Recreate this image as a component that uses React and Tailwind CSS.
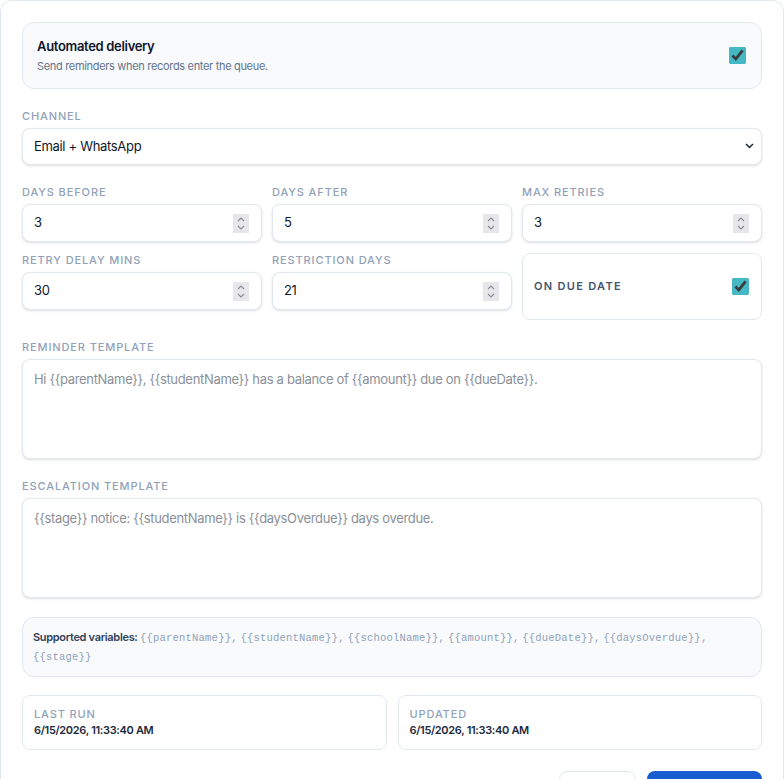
import { useState } from "react";

const labelCls =
  "text-[11px] font-medium uppercase tracking-[0.08em] text-slate-400 leading-[14px]";
const boxCls =
  "flex h-[38px] w-full items-center rounded-lg border border-slate-200 bg-white pl-[11px] pr-[12px] shadow-sm";

const Stepper = () => (
  <div className="flex h-[19px] w-[16px] flex-col items-center justify-center gap-[3px] bg-[#e6e6eb]">
    <svg width="8" height="5" viewBox="0 0 8 5" fill="none">
      <path d="M1 4 L4 1 L7 4" stroke="#8b8b96" strokeWidth="1.1" />
    </svg>
    <svg width="8" height="5" viewBox="0 0 8 5" fill="none">
      <path d="M1 1 L4 4 L7 1" stroke="#8b8b96" strokeWidth="1.1" />
    </svg>
  </div>
);

const NumberField = ({ label, value }) => (
  <div className="flex flex-col gap-[5px]">
    <span className={labelCls}>{label}</span>
    <div className={boxCls}>
      <input
        type="number"
        defaultValue={value}
        className="min-w-0 flex-1 bg-transparent text-[13px] text-slate-900 outline-none [appearance:textfield] [&::-webkit-inner-spin-button]:appearance-none [&::-webkit-outer-spin-button]:appearance-none"
      />
      <Stepper />
    </div>
  </div>
);

const MetaBox = ({ label, value }) => (
  <div className="flex flex-col gap-[3px] rounded-lg border border-slate-200 bg-white px-[11px] py-[12px]">
    <span className="text-[11px] font-medium uppercase leading-[13px] tracking-[0.08em] text-slate-400">
      {label}
    </span>
    <span className="text-[11px] font-semibold leading-[13px] text-slate-800">{value}</span>
  </div>
);

const vars = [
  "{{parentName}}",
  "{{studentName}}",
  "{{schoolName}}",
  "{{amount}}",
  "{{dueDate}}",
  "{{daysOverdue}}",
  "{{stage}}",
];

export default function App() {
  const [auto, setAuto] = useState(true);
  const [onDue, setOnDue] = useState(true);

  return (
    <div
      className="min-h-screen bg-white tracking-[-0.02em]"
      style={{ fontFamily: "Inter, 'Noto Sans', sans-serif" }}
    >
      <div className="flex flex-col gap-5 rounded-xl border border-slate-200 bg-white p-[21px]">
        {/* automated toggle */}
        <div className="flex items-center justify-between rounded-xl border border-slate-200 bg-slate-50 px-[14px] py-[14px]">
          <div className="flex flex-col gap-[4px]">
            <span className="text-[13px] font-semibold leading-[18px] text-slate-900">
              Automated delivery
            </span>
            <span className="text-[11px] leading-[15px] text-slate-500">
              Send reminders when records enter the queue.
            </span>
          </div>
          <input
            type="checkbox"
            checked={auto}
            onChange={(e) => setAuto(e.target.checked)}
            className="mr-[1px] h-[17px] w-[17px] accent-[#45b8c6]"
          />
        </div>

        <div className="flex flex-col gap-[5px]">
          <span className={labelCls}>Channel</span>
          <div className="relative">
            <select className="h-[37px] w-full appearance-none rounded-lg border border-slate-200 bg-white px-[11px] text-[13px] text-slate-900 shadow-sm outline-none">
              <option>Email + WhatsApp</option>
              <option>Email</option>
              <option>WhatsApp</option>
            </select>
            <svg
              className="pointer-events-none absolute right-[8px] top-[15px]"
              width="9"
              height="6"
              viewBox="0 0 9 6"
              fill="none"
            >
              <path d="M1 1 L4.5 4.5 L8 1" stroke="#1e293b" strokeWidth="1.5" />
            </svg>
          </div>
        </div>

        <div className="grid grid-cols-3 items-start gap-x-[10px] gap-y-[11px]">
          <NumberField label="Days before" value={3} />
          <NumberField label="Days after" value={5} />
          <NumberField label="Max retries" value={3} />
          <NumberField label="Retry delay mins" value={30} />
          <NumberField label="Restriction days" value={21} />
          <label className="flex h-[67px] items-center justify-between rounded-lg border border-slate-200 bg-white px-[11px]">
            <span className="text-[11px] font-semibold uppercase tracking-[0.12em] text-slate-600">
              On due date
            </span>
            <input
              type="checkbox"
              checked={onDue}
              onChange={(e) => setOnDue(e.target.checked)}
              className="mr-[1px] h-[17px] w-[17px] accent-[#45b8c6]"
            />
          </label>
        </div>

        <div className="flex flex-col gap-[5px]">
          <span className={labelCls}>Reminder template</span>
          <textarea
            rows={4}
            placeholder="Hi {{parentName}}, {{studentName}} has a balance of {{amount}} due on {{dueDate}}."
            className="h-[100px] w-full resize-none rounded-lg border border-slate-200 bg-white px-[11px] py-[10px] text-[13px] text-slate-900 shadow-sm outline-none placeholder:text-[#8a9099]"
          />
        </div>

        <div className="flex flex-col gap-[5px]">
          <span className={labelCls}>Escalation template</span>
          <textarea
            rows={4}
            placeholder="{{stage}} notice: {{studentName}} is {{daysOverdue}} days overdue."
            className="h-[100px] w-full resize-none rounded-lg border border-slate-200 bg-white px-[11px] py-[10px] text-[13px] text-slate-900 shadow-sm outline-none placeholder:text-[#8a9099]"
          />
        </div>

        <div className="-mt-px rounded-xl border border-slate-200 bg-slate-50 px-[10px] py-[10px] text-[11px] leading-[18px]">
          <span className="font-semibold text-slate-700">Supported variables: </span>
          {vars.map((v, i) => (
            <span key={v}>
              <span
                className="text-[10.5px] tracking-[0.02em] text-slate-400"
                style={{ fontFamily: "'Liberation Mono', 'DejaVu Sans Mono', monospace" }}
              >
                {v}
                {i < vars.length - 1 ? "," : ""}
              </span>{" "}
            </span>
          ))}
        </div>

        <div className="-mt-[2px] grid grid-cols-2 gap-[11px]">
          <MetaBox label="Last run" value="6/15/2026, 11:33:40 AM" />
          <MetaBox label="Updated" value="6/15/2026, 11:33:40 AM" />
        </div>

        <div className="flex justify-end gap-[11px] pt-[1px]">
          <button className="h-[36px] w-[77px] rounded-lg border border-slate-200 bg-white text-[13px] font-medium text-slate-700">
            Cancel
          </button>
          <button className="h-[36px] w-[115px] rounded-lg bg-[#1a5dd0] text-[13px] font-semibold text-white">
            Save settings
          </button>
        </div>
      </div>
    </div>
  );
}
